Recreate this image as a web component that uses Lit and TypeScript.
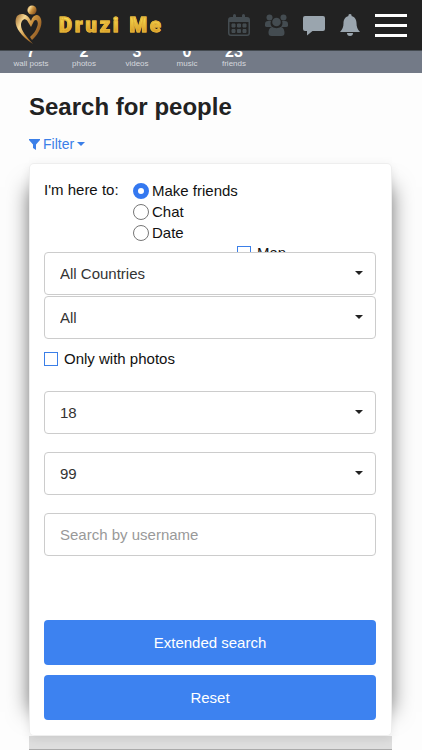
import { LitElement, html, css, svg } from "lit";
import { customElement } from "lit/decorators.js";

const stats = [
  { value: "7", label: "wall posts" },
  { value: "2", label: "photos" },
  { value: "3", label: "videos" },
  { value: "0", label: "music" },
  { value: "23", label: "friends" },
];

const goals = ["Make friends", "Chat", "Date"];

const logo = svg`
  <defs>
    <linearGradient id="gold" x1="0" y1="0" x2="1" y2="0.6">
      <stop offset="0" stop-color="#9a6428" />
      <stop offset="0.3" stop-color="#f6d894" />
      <stop offset="0.6" stop-color="#c98f3c" />
      <stop offset="1" stop-color="#8a5522" />
    </linearGradient>
  </defs>
  <circle cx="17" cy="5" r="4.6" fill="url(#gold)" />
  <path fill="url(#gold)" d="M16 16C13 9 6 7 2 11C-2 18 2 28 18 39C12 32 6 26 6 20C6 14 11 12 13 17L16 22L19 16C22 13 24 18 22 22C21 26 18 29 15 32L17 35C23 30 28 21 26 14C24 8 18 9 16 16Z" />`;

const calendar = svg`
  <path fill-rule="evenodd" d="M3 3h2V1.500a1.500 1.500 0 0 1 3 0V3h6V1.500a1.500 1.500 0 0 1 3 0V3h2a3 3 0 0 1 3 3v13a3 3 0 0 1-3 3H3a3 3 0 0 1-3-3V6a3 3 0 0 1 3-3ZM1.500 8v11A1.500 1.500 0 0 0 3 20.500h16a1.500 1.500 0 0 0 1.500-1.500V8Z" />
  <path d="M4 10h3v3H4ZM9.500 10h3v3h-3ZM15 10h3v3h-3ZM4 15.500h3v3H4ZM9.500 15.500h3v3h-3ZM15 15.500h3v3h-3Z" stroke="currentColor" stroke-linejoin="round" />`;

const people = svg`
  <circle cx="4.500" cy="3.500" r="3" /><circle cx="18.500" cy="3.500" r="3" />
  <path d="M0 12V10a3 3 0 0 1 3-3h3a6 6 0 0 0 1 6H2a2 2 0 0 1-2-1ZM23 12V10a3 3 0 0 0-3-3h-3a6 6 0 0 1-1 6h5a2 2 0 0 0 2-1Z" />
  <circle cx="11.500" cy="8" r="4.300" />
  <path d="M3.500 19c0-4 2-6 4-6 2 1.500 6 1.500 8 0 2 0 4 2 4 6a3 3 0 0 1-3 3h-10a3 3 0 0 1-3-3Z" />`;

const chat = svg`<path d="M2 1h18a2 2 0 0 1 2 2v11a2 2 0 0 1-2 2H9.500L4 20.500V16H2a2 2 0 0 1-2-2V3a2 2 0 0 1 2-2Z" />`;

const bell = svg`<path d="M10 0a1.500 1.500 0 0 1 1.500 2C15 3 16.500 6 16.500 9c0 4 1 6.500 3.500 9H0c2.500-2.500 3.500-5 3.500-9 0-3 1.500-6 5-7A1.500 1.500 0 0 1 10 0ZM7 19h6a3 3 0 0 1-6 0Z" />`;

const bars = svg`<path d="M0 0h32v3H0ZM0 10h32v3H0ZM0 20h32v3H0Z" />`;

@customElement("app-root")
export class AppRoot extends LitElement {
  static styles = css`
    :host {
      display: block;
      min-height: 100vh;
      background: #fdfdfd;
      color: #111;
      font: 15px/20px "Liberation Sans", Arial, sans-serif;
    }
    * {
      box-sizing: border-box;
    }
    svg {
      display: block;
      fill: currentColor;
    }
    .header {
      position: sticky;
      top: 0;
      z-index: 5;
      display: flex;
      align-items: center;
      justify-content: space-between;
      height: 51px;
      padding: 0 15px;
      background: #222;
      border-bottom: 1px solid #444a50;
    }
    .brand {
      display: flex;
      align-items: center;
      gap: 16px;
      text-decoration: none;
    }
    .name {
      font: 900 20px/24px Roboto, "Liberation Sans", sans-serif;
      letter-spacing: 3px;
      color: transparent;
      -webkit-text-stroke: 1px #e3b338;
      background: linear-gradient(#f8dc50 20%, #d79a25 80%);
      -webkit-background-clip: text;
      background-clip: text;
    }
    .nav {
      display: flex;
      align-items: center;
      gap: 15px;
    }
    .nav button,
    .filter {
      border: 0;
      padding: 0;
      background: none;
      font: inherit;
    }
    .nav .dim {
      color: #444c51;
    }
    .nav .bright {
      color: #9aa5ae;
    }
    .nav .menu {
      color: #fff;
    }
    .stats {
      display: grid;
      grid-template-columns: 54px 52px 54px 46px 48px;
      align-content: end;
      height: 22px;
      padding: 0 4px 4px;
      overflow: hidden;
      background: #737a87;
    }
    .stat {
      display: flex;
      flex-direction: column;
      align-items: center;
      font-size: 8px;
      line-height: 10px;
      color: #d5d8dd;
    }
    .stat b {
      font-size: 16px;
      line-height: 14px;
      color: #fff;
    }
    main {
      padding: 19px 30px 0 29px;
    }
    h1 {
      margin: 0;
      font-size: 24px;
      line-height: 30px;
      color: #222;
    }
    .filter {
      display: flex;
      align-items: center;
      gap: 3px;
      margin-top: 12px;
      font-size: 14px;
      line-height: 20px;
      color: #3b7fe8;
    }
    .panel {
      position: relative;
      z-index: 0;
      margin-top: 9px;
    }
    .panel::before {
      content: "";
      position: absolute;
      z-index: -1;
      inset: 24px 0;
      box-shadow: 0 0 20px rgba(0, 0, 0, 0.5);
    }
    .card {
      padding: 17px 16px 16px 15px;
      background: #fff;
      border-radius: 5px;
      box-shadow: inset 0 0 0 1px #eee, 0 3px 10px rgba(0, 0, 0, 0.08);
    }
    fieldset {
      display: grid;
      grid-template-columns: 89px 1fr;
      min-width: 0;
      border: 0;
      margin: 0;
      padding: 0;
    }
    .choices {
      display: grid;
      row-gap: 1px;
      padding-top: 1px;
    }
    .choices label,
    .tick {
      display: flex;
      align-items: center;
    }
    .choices label {
      gap: 3px;
    }
    input[type="radio"],
    input[type="checkbox"] {
      appearance: none;
      flex: none;
      margin: 0;
      background: #fff;
    }
    input[type="radio"] {
      width: 16px;
      height: 16px;
      border: 1px solid #767676;
      border-radius: 50%;
    }
    input[type="radio"]:checked {
      border: 5px solid #3478f0;
    }
    input[type="checkbox"] {
      width: 14px;
      height: 14px;
      border: 1px solid #3b7fe8;
    }
    .tick {
      gap: 6px;
    }
    .gender {
      height: 9px;
      overflow: hidden;
      align-items: flex-start;
      margin-left: 193px;
    }
    .gender input[type="checkbox"] {
      margin-top: 3px;
    }
    .select {
      position: relative;
      display: block;
    }
    .select::after {
      content: "";
      position: absolute;
      right: 13px;
      top: 19px;
      border: 4px solid transparent;
      border-top-color: #222;
      border-bottom: 0;
      pointer-events: none;
    }
    select,
    .text {
      appearance: none;
      display: block;
      width: 100%;
      height: 43px;
      margin: 0;
      padding: 0 15px;
      border: 1px solid #ccc;
      border-radius: 4px;
      background: #fff;
      color: #333;
      font: inherit;
    }
    .text::placeholder {
      color: #999;
      opacity: 1;
    }
    .places {
      display: grid;
      gap: 1px;
    }
    .photos {
      margin: 10px 0 22px;
    }
    .fields {
      display: grid;
      gap: 18px;
    }
    .actions {
      display: grid;
      gap: 10px;
      margin-top: 64px;
    }
    .actions button {
      height: 45px;
      border: 0;
      border-radius: 4px;
      background: #3d82f0;
      color: #fff;
      font: inherit;
    }
    .results {
      height: 14px;
      background: #dedede;
      border-bottom: 1px solid #aaa;
    }
  `;

  private dropdown(label: string, value: string) {
    return html`<div class="select">
      <select aria-label=${label}>
        <option>${value}</option>
      </select>
    </div>`;
  }

  render() {
    return html`
      <header class="header">
        <a class="brand" href="#">
          <svg width="28" height="40" viewBox="0 0 28 40">${logo}</svg>
          <span class="name">Druzi Me</span>
        </a>
        <nav class="nav">
          <button class="dim" aria-label="Events">
            <svg width="22" height="22" viewBox="0 0 22 22">${calendar}</svg>
          </button>
          <button class="dim" aria-label="Friends">
            <svg width="23" height="22" viewBox="0 0 23 22">${people}</svg>
          </button>
          <button class="bright" aria-label="Messages">
            <svg width="22" height="21" viewBox="0 0 22 21">${chat}</svg>
          </button>
          <button class="bright" aria-label="Notifications">
            <svg width="20" height="22" viewBox="0 0 20 22">${bell}</svg>
          </button>
          <button class="menu" aria-label="Menu">
            <svg width="32" height="23" viewBox="0 0 32 23">${bars}</svg>
          </button>
        </nav>
      </header>
      <section class="stats">
        ${stats.map((s) => html`<div class="stat"><b>${s.value}</b>${s.label}</div>`)}
      </section>
      <main>
        <h1>Search for people</h1>
        <button class="filter">
          <svg width="11" height="11" viewBox="0 0 11 11">
            <path d="M0 0h11v1L7 5.500V11L4 9V5.500L0 1Z" />
          </svg>
          Filter
          <svg width="8" height="4" viewBox="0 0 8 4"><path d="M0 0h8L4 4Z" /></svg>
        </button>
        <div class="panel">
          <form class="card">
            <fieldset aria-labelledby="goal">
              <span id="goal">I'm here to:</span>
              <div class="choices">
                ${goals.map(
                  (g, i) => html`<label><input type="radio" name="goal" ?checked=${i === 0} />${g}</label>`
                )}
              </div>
            </fieldset>
            <label class="tick gender"><input type="checkbox" />Man</label>
            <div class="places">
              ${this.dropdown("Country", "All Countries")} ${this.dropdown("Region", "All")}
            </div>
            <label class="tick photos"><input type="checkbox" />Only with photos</label>
            <div class="fields">
              ${this.dropdown("Age from", "18")} ${this.dropdown("Age to", "99")}
              <input class="text" type="text" placeholder="Search by username" aria-label="Username" />
            </div>
            <div class="actions">
              <button type="button">Extended search</button>
              <button type="button">Reset</button>
            </div>
          </form>
        </div>
        <div class="results"></div>
      </main>
    `;
  }
}
